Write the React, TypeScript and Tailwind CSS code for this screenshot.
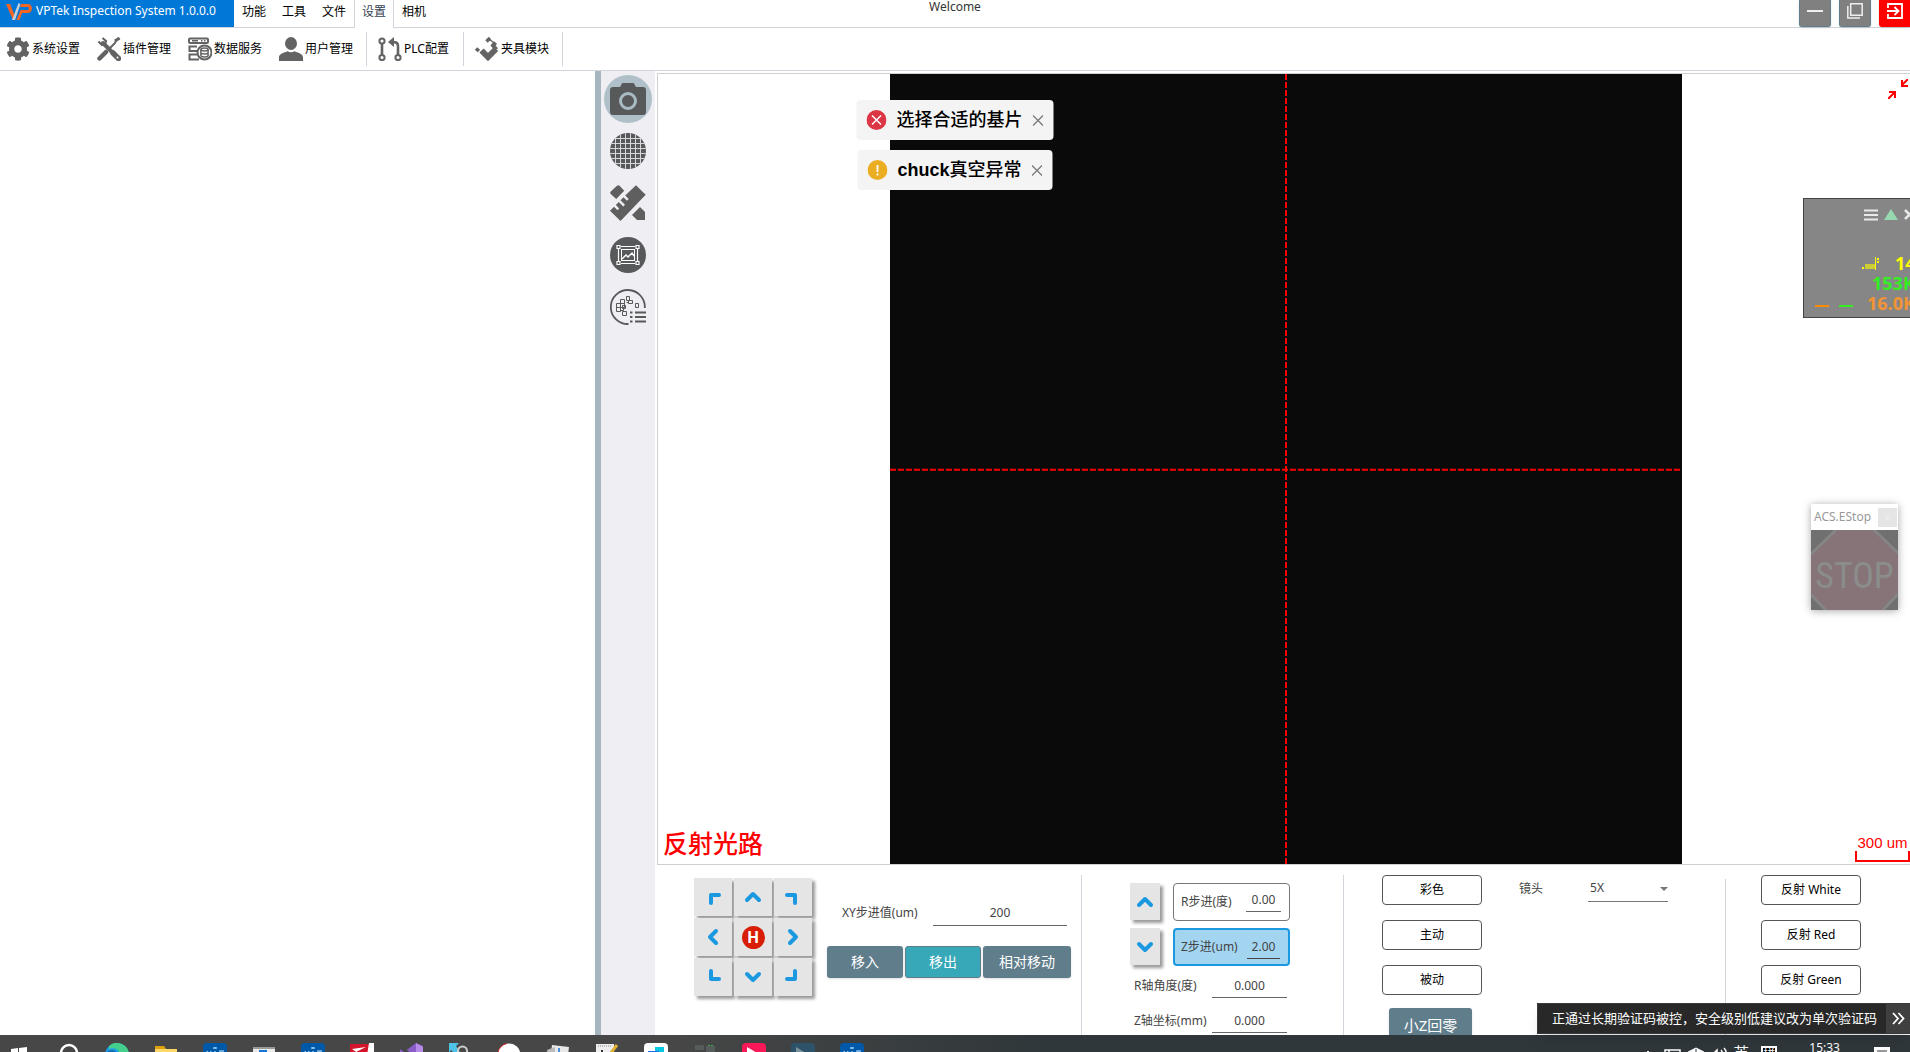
import type { ReactNode } from "react";
import { FaCog } from "react-icons/fa";

const BLUE = "#1a98e0";

/* ---------- drawings ---------- */

function Logo() {
  return (
    <svg width="26" height="18" viewBox="0 0 26 18" className="shrink-0">
      <path d="M0 1h4l4.500 11-1.500 5z" fill="#f26522" />
      <path d="M12.500 0l2 1-5.500 16H6z" fill="#c9ced6" />
      <path d="M15 1h7.500c4.500 0 4.500 9 0 9h-6.500l-2.500 7h-3l4-10h7.500c1 0 1-3 0-3h-8z" fill="#f26522" />
    </svg>
  );
}

function ToolsIcon() {
  return (
    <svg width="24" height="24" viewBox="0 0 24 24" fill="none" stroke="#636363">
      <path d="M6 6l14 14" strokeWidth="4" strokeLinecap="round" />
      <path d="M1.500 4.500L5 8l3-1 1-3-3.500-3" strokeWidth="2.200" />
      <path d="M22.500 1.500L19 3.500l-1 2.500-5 5" strokeWidth="2" />
      <path d="M22.500 1l-4.500 3" strokeWidth="3" />
      <path d="M9 15l-6.500 6.500" strokeWidth="4.500" strokeLinecap="round" />
      <path d="M16 16l5.500 5.500" strokeWidth="5.500" strokeLinecap="round" />
      <circle cx="20.500" cy="20.500" r="1" fill="#fff" stroke="none" />
    </svg>
  );
}

function DataIcon() {
  return (
    <svg width="24" height="24" viewBox="0 0 24 24" fill="none" stroke="#636363" strokeWidth="2">
      <rect x="1" y="1.500" width="19" height="4.500" rx="1" />
      <path d="M4 3.700h6M13 3.700h1.500M16 3.700h1.500" strokeWidth="1.500" />
      <path d="M9 9.500H1.500v4.500H9M9 17.500H1.500v5H11" strokeWidth="2" />
      <circle cx="16.500" cy="15.500" r="7" fill="#fff" />
      <ellipse cx="16.500" cy="12.500" rx="3.600" ry="1.500" strokeWidth="1.500" />
      <path d="M12.900 12.500v6c0 2 7.200 2 7.200 0v-6M12.900 15.500c0 2 7.200 2 7.200 0" strokeWidth="1.500" />
    </svg>
  );
}

function UserIcon() {
  return (
    <svg width="24" height="24" viewBox="0 0 24 24" fill="#636363">
      <ellipse cx="12" cy="6.500" rx="6" ry="6.500" />
      <path d="M0 24v-3.500C0 17 4 16 8.500 14.200c2 1.500 5 1.500 7 0C20 16 24 17 24 20.500V24z" />
    </svg>
  );
}

function PlcIcon() {
  return (
    <svg width="24" height="24" viewBox="0 0 24 24" fill="none" stroke="#636363" strokeWidth="2">
      <circle cx="4" cy="4" r="2.600" />
      <circle cx="4" cy="20.500" r="2.600" />
      <circle cx="20" cy="20.500" r="2.600" />
      <path d="M4 7v11" strokeWidth="2.600" />
      <path d="M20 18V9c0-3-1.500-4-5-4" strokeWidth="2.600" />
      <path d="M16 0v10l-6-5z" fill="#636363" stroke="none" />
    </svg>
  );
}

function ClampIcon() {
  return (
    <svg width="24" height="24" viewBox="0 0 24 24" fill="none" stroke="#636363">
      <path d="M6.500 13.500l6.500 6.500 8-8" strokeWidth="6" />
      <path d="M21.500 12.500l-3.500-4 2.500-3" strokeWidth="4" />
      <path d="M11.500 4.500L15 1M1 11.500l3 2.500" strokeWidth="3.500" />
      <path d="M14.500 2.500l4 3" strokeWidth="1.500" />
    </svg>
  );
}

function CameraIcon() {
  return (
    <svg width="48" height="48" viewBox="0 0 48 48">
      <circle cx="24" cy="24" r="24" fill="#b0c0c8" />
      <path d="M9 12h7l2-3.500c.3-.4.600-.5 1-.5h10c.400 0 .700.100 1 .5l2 3.500h7c2 0 3 1 3 3v22c0 2-1 3-3 3H9c-2 0-3-1-3-3V15c0-2 1-3 3-3z" fill="#58595b" />
      <circle cx="24" cy="26" r="7.500" fill="none" stroke="#a9bbc4" strokeWidth="3" />
    </svg>
  );
}

function WaferGridIcon() {
  const lines = [5.5, 10.5, 15.5, 20.5, 25.5, 30.5];
  return (
    <svg width="36" height="36" viewBox="0 0 36 36">
      <defs>
        <clipPath id="wafer">
          <circle cx="18" cy="18" r="18" />
        </clipPath>
      </defs>
      <g clipPath="url(#wafer)">
        <rect width="36" height="36" fill="#58595b" />
        {lines.map((p) => (
          <path key={p} d={`M0 ${p}h36M${p} 0v36`} stroke="#d8d8dc" />
        ))}
      </g>
    </svg>
  );
}

function RulerIcon() {
  return (
    <svg width="36" height="36" viewBox="0 0 36 36" fill="#5f5f5f">
      <path d="M7 .8c.8-.8 1.800-.8 2.600 0l4.600 5-8 8.200-5.400-5c-.8-.8-.8-1.800 0-2.600z" />
      <path d="M26 .3l9.700 9.500L10.500 36 0 25.800l4-4 3.500 3.400 1.700-1.700-3.400-3.500 3-3 4.500 4.500 1.700-1.700-4.500-4.500 3-3 3.500 3.500 1.700-1.700-3.500-3.500z" />
      <path d="M30 22l5 5v8h-8l-5-5z" />
    </svg>
  );
}

function ImageFrameIcon() {
  return (
    <svg width="36" height="36" viewBox="0 0 36 36" fill="none" stroke="#fff">
      <circle cx="18" cy="18" r="18" fill="#58595b" stroke="none" />
      <path d="M11 9.500h14M11 26.500h14M8.500 12v12M27.500 12v12" strokeWidth="1.200" />
      <rect x="11.500" y="12.500" width="13" height="11" />
      <path d="M7 8.500h3v3H7zM26 8.500h3v3h-3zM7 24.500h3v3H7zM26 24.500h3v3h-3z" strokeWidth="1.200" />
      <path d="M12 22l4-4 2 2 4-4 2 3" strokeWidth="1.400" />
    </svg>
  );
}

function WaferListIcon() {
  return (
    <svg width="36" height="36" viewBox="0 0 36 36" fill="none" stroke="#58595b">
      <path d="M18.500 35A17 17 0 1 1 34.800 19" strokeWidth="1.800" />
      <path d="M10.500 10.500h4v4h-4zM6.500 14.500h4v4h-4zM10.500 14.500h4v4h-4zM6.500 18.500h4v4h-4zM10.500 18.500h3v3h-3zM16.500 7.500h3v4h-3zM18.500 11.500h4v3h-4zM16.500 13.500h2M12.500 22.500h4v4h-4zM12.500 16.500h3v3h-3zM25.500 14.500h3v4h-3z" />
      <path d="M20 23.500h2.500M20 28h2.500M20 32.500h2.500M25 23.500h11M25 28h11M25 32.500h11" strokeWidth="2" />
    </svg>
  );
}

function Stroke({ d }: { d: string }) {
  return (
    <svg width="38" height="38" viewBox="0 0 38 38" fill="none" stroke={BLUE} strokeWidth="4" strokeLinecap="round" strokeLinejoin="round" className="shrink-0">
      <path d={d} />
    </svg>
  );
}

const UP = "M13 22l6-6 6 6";
const DOWN = "M13 16l6 6 6-6";
const pad: { label: string; d: string }[] = [
  { label: "左上", d: "M17 25v-8h8" },
  { label: "上", d: UP },
  { label: "右上", d: "M13 17h8v8" },
  { label: "左", d: "M22 13l-6 6 6 6" },
  { label: "H", d: "" },
  { label: "右", d: "M16 13l6 6-6 6" },
  { label: "左下", d: "M17 13v8h8" },
  { label: "下", d: DOWN },
  { label: "右下", d: "M21 13v8h-8" },
];

/* ---------- building blocks ---------- */

function MenuTab({ children, active = false }: { children: ReactNode; active?: boolean }) {
  return (
    <button
      className={
        active
          ? "-mb-px h-7 border-x border-gray-300 bg-white px-[7px] pb-1 text-gray-700"
          : "h-full px-2 pb-[3px]"
      }
    >
      {children}
    </button>
  );
}

function Tool({ icon, children }: { icon: ReactNode; children: ReactNode }) {
  return (
    <button className="flex items-center gap-0.5 whitespace-nowrap">
      {icon}
      <span>{children}</span>
    </button>
  );
}

function RailButton({ label, children }: { label: string; children: ReactNode }) {
  return (
    <button aria-label={label} className="flex h-[52px] w-full items-center justify-center">
      {children}
    </button>
  );
}

function OutlineButton({ children }: { children: ReactNode }) {
  return (
    <button className="h-[30px] w-[100px] rounded-[4px] border border-[#555] bg-white text-black">{children}</button>
  );
}

function Toast({ kind, children }: { kind: "error" | "warning"; children: ReactNode }) {
  return (
    <div role="alert" className="flex h-10 items-center gap-2.5 rounded-sm bg-[#f4f4f4] pl-2.5 text-lg font-medium whitespace-nowrap text-black">
      <svg width="20" height="20" viewBox="0 0 20 20">
        <circle cx="10" cy="10" r="10" fill={kind === "error" ? "#dc3545" : "#ebae23"} />
        {kind === "error" ? (
          <path d="M5.500 5.500l9 9M14.500 5.500l-9 9" stroke="#fff" strokeWidth="1.500" />
        ) : (
          <path d="M10 5v7M10 13.500v2" stroke="#fff" strokeWidth="1.800" />
        )}
      </svg>
      <span>{children}</span>
      <button aria-label="关闭" className="pr-2.5">
        <svg width="11" height="11" viewBox="0 0 11 11" stroke="#777" strokeWidth="1.200">
          <path d="M.5.5l10 10M10.500.5l-10 10" />
        </svg>
      </button>
    </div>
  );
}

function AxisValue({ id, label, value }: { id: string; label: string; value: string }) {
  return (
    <div className="flex h-[35px] items-center justify-between pl-1">
      <label htmlFor={id}>{label}</label>
      <input id={id} defaultValue={value} className="mr-[3px] h-6 w-[75px] border-b border-[#666] text-center outline-none" />
    </div>
  );
}

const shadow = "bg-[#e5e5e5] shadow-[3px_3px_3px_rgba(0,0,0,0.4)]";

function ControlPanel() {
  return (
    <section className="grid h-[170px] shrink-0 grid-cols-[427fr_262fr_382fr_184fr] overflow-hidden text-xs text-[#444]">
      <div className="flex pt-[13px]">
        <div className="ml-[39px] grid h-[118px] grid-cols-3 gap-0.5">
          {pad.map((p) => (
            <button key={p.label} aria-label={p.label} className={`flex size-[38px] items-center justify-center ${shadow}`}>
              {p.d ? (
                <Stroke d={p.d} />
              ) : (
                <span className="flex size-[23px] items-center justify-center rounded-full bg-[#d81e06] text-base font-bold text-white">H</span>
              )}
            </button>
          ))}
        </div>
        <div className="ml-[15px] flex flex-col pt-[22px]">
          <div className="flex items-center justify-between pr-1 pl-[15px]">
            <label htmlFor="xy">XY步进值(um)</label>
            <input id="xy" defaultValue="200" className="h-[26px] w-[134px] border-b border-[#666] text-center outline-none" />
          </div>
          <div className="mt-5 flex gap-0.5 text-sm text-white">
            <button className="h-8 w-[76px] rounded-[3px] bg-[#607d8b] shadow">移入</button>
            <button className="h-8 w-[76px] rounded-[3px] border border-[#607d8b] bg-[#36a8b8] shadow">移出</button>
            <button className="h-8 w-[88px] rounded-[3px] bg-[#607d8b] shadow">相对移动</button>
          </div>
        </div>
        <div className="mt-[-3px] ml-auto w-px bg-gray-300" />
      </div>

      <div className="flex justify-between pt-2.5">
        <div className="ml-12 flex w-[160px] flex-col pt-2">
          <div className="flex gap-[13px]">
            <button aria-label="增加" className={`flex h-[37px] w-[30px] items-center justify-center ${shadow}`}>
              <Stroke d={UP} />
            </button>
            <div className="flex h-[38px] w-[117px] items-center justify-between rounded-[4px] border border-[#777] pr-2 pl-[7px]">
              <label htmlFor="r-step">R步进(度)</label>
              <input id="r-step" defaultValue="0.00" className="mb-1 h-6 w-[35px] border-b border-[#666] text-center outline-none" />
            </div>
          </div>
          <div className="mt-[7px] flex gap-[13px]">
            <button aria-label="减少" className={`flex h-[37px] w-[30px] items-center justify-center ${shadow}`}>
              <Stroke d={DOWN} />
            </button>
            <div className="flex h-[38px] w-[117px] items-center justify-between rounded-[4px] border-2 border-[#1a98e0] bg-[#a3d5f1] pr-2 pl-1.5">
              <label htmlFor="z-step">Z步进(um)</label>
              <input id="z-step" defaultValue="2.00" className="h-6 w-[33px] border-b border-[#444] bg-transparent text-center outline-none" />
            </div>
          </div>
          <div className="pt-0.5">
            <AxisValue id="r-axis" label="R轴角度(度)" value="0.000" />
            <AxisValue id="z-axis" label="Z轴坐标(mm)" value="0.000" />
          </div>
        </div>
        <div className="w-px bg-gray-300" />
      </div>

      <div className="flex pt-2.5">
        <div className="ml-[38px] flex w-[100px] flex-col gap-[15px]">
          <OutlineButton>彩色</OutlineButton>
          <OutlineButton>主动</OutlineButton>
          <OutlineButton>被动</OutlineButton>
          <button className="-mt-0.5 ml-[7px] h-[34px] w-[83px] shrink-0 rounded-[3px] bg-[#607d8b] text-[15px] text-white shadow">小Z回零</button>
        </div>
        <div className="ml-[37px] flex h-[27px] items-center gap-[45px]">
          <label htmlFor="lens">镜头</label>
          <div className="relative h-full w-20 border-b border-[#777]">
            <select id="lens" defaultValue="5X" className="h-full w-full appearance-none bg-transparent pl-0.5 outline-none">
              <option>5X</option>
            </select>
            <span className="pointer-events-none absolute top-3 right-0 border-x-4 border-t-4 border-x-transparent border-t-[#777]" />
          </div>
        </div>
        <div className="mt-1 ml-auto w-px bg-gray-300" />
      </div>

      <div className="flex flex-col gap-[15px] pt-2.5 pl-[35px]">
        <OutlineButton>反射 White</OutlineButton>
        <OutlineButton>反射 Red</OutlineButton>
        <OutlineButton>反射 Green</OutlineButton>
      </div>
    </section>
  );
}

function Viewport() {
  return (
    <section className="relative mt-0.5 ml-0.5 flex min-h-0 flex-1 justify-center border border-r-0 border-[#d0d0d0] pl-1">
      <div className="flex aspect-[792/790] h-full bg-[#0a0a0a]">
        <svg width="100%" height="100%" className="text-[#ff0000]" stroke="currentColor" strokeWidth="2" strokeDasharray="6 2">
          <line x1="0" y1="50.1%" x2="100%" y2="50.1%" />
          <line x1="50%" y1="0" x2="50%" y2="100%" />
        </svg>
      </div>
      <span className="absolute bottom-[3px] left-[5px] text-[25px] leading-9 font-medium text-[#ff0000]">反射光路</span>
      <svg width="20" height="20" viewBox="0 0 20 20" fill="none" stroke="#ff0000" strokeWidth="2" className="absolute top-[5px] right-0.5">
        <path d="M20 0l-6 6M14 1v6h6" />
        <path d="M0 20l6-6M1 13h6v6" />
      </svg>
      <div className="absolute right-0 bottom-0.5 flex flex-col items-center">
        <span className="font-['Liberation_Sans'] text-[15px] leading-4 text-[#ff0000]">300 um</span>
        <span className="h-[11px] w-[55px] border-2 border-t-0 border-[#ff0000]" />
      </div>
    </section>
  );
}

function NetMonitor() {
  return (
    <aside className="absolute top-[198px] right-0 h-[120px] w-[107px] overflow-hidden border border-r-0 border-[#444] bg-[#868686] font-['Open_Sans'] text-lg leading-5 font-bold">
      <div className="mt-2.5 flex pl-[60px]">
        <svg width="56" height="12" viewBox="0 0 56 12" className="shrink-0" fill="none">
          <path d="M0 1.500h14M0 6h14M0 10.500h14" stroke="#e8e8e8" strokeWidth="2" />
          <path d="M27 0l7 11H20z" fill="#98d8b0" />
          <path d="M41 1l9 9M50 1l-9 9" stroke="#e8e8e8" strokeWidth="2.500" />
        </svg>
      </div>
      <div className="mt-8 flex pl-[58px] text-[#ffff00]">
        <svg width="18" height="13" viewBox="0 0 18 13" className="mt-1 mr-[15px] shrink-0">
          <path d="M0 10h2v2H0z M13 0h1v13h-1z M15 1h2v2h-2z M15 4h2v2h-2z" fill="#ffff00" />
          <path d="M3 7h10v5H3z" fill="#cccc33" />
        </svg>
        14
      </div>
      <div className="pl-[68px] text-[#33ee22]">153K</div>
      <div className="flex pl-[11px] text-[#f29434]">
        <span className="mt-3 h-0.5 w-3.5 shrink-0 bg-[#ff8c00]" />
        <span className="mt-3 mr-3.5 ml-2.5 h-0.5 w-3.5 shrink-0 bg-[#33ee22]" />
        16.0K
      </div>
    </aside>
  );
}

function EStop() {
  return (
    <aside className="absolute top-[504px] right-3 w-[87px] bg-white shadow-[0_1px_8px_rgba(0,0,0,0.35)]">
      <div className="flex h-[26px] items-center justify-between pr-px pl-[3px] text-xs text-[#999]">
        ACS.EStop
        <button aria-label="关闭" className="size-[19px] bg-[#e5e5e5] text-[10px] leading-4 text-[#f0f0f0]">x</button>
      </div>
      <svg width="87" height="80" viewBox="0 0 87 80" className="block">
        <rect width="87" height="80" fill="#707070" />
        <path d="M25 0h38l24 23v41L72 80H15L0 65V24z" fill="#867478" />
        <path d="M25 0L0 24M63 0l24 23M0 65l15 15M87 64L72 80" stroke="#858585" strokeWidth="3" />
        <text x="43.500" y="58" textAnchor="middle" fontFamily="Liberation Sans Narrow, Roboto Condensed, Liberation Sans" fontSize="36" fill="#8b8d8b">
          STOP
        </text>
      </svg>
    </aside>
  );
}

const VieIcon = ({ faded = false }: { faded?: boolean }) => (
  <>
    <rect width="24" height="24" rx="4" fill={faded ? "#2c5369" : "#0058a8"} />
    {faded ? (
      <path d="M5 4l10 6-10 8z" fill="#7a929c" />
    ) : (
      <path d="M4 8l2 5 2-5M12 8v6M21 8h-4v6M12 4v2M10 5h4" stroke="#8fc1ea" strokeWidth="1.500" fill="none" />
    )}
  </>
);

const apps: { name: string; art: ReactNode }[] = [
  { name: "开始", art: <path d="M4 6l7-1v9H4zM12 5l8-1v10h-8z" fill="#fff" /> },
  { name: "搜索", art: <circle cx="13" cy="10" r="8" fill="none" stroke="#fff" strokeWidth="2.500" /> },
  {
    name: "Edge",
    art: (
      <>
        <circle cx="12" cy="12" r="12" fill="#1b9de2" />
        <path d="M4 3a12 12 0 0 1 20 9h-9C14 6 9 4 4 6z" fill="#45cf8c" />
        <path d="M0 11c4-6 12-4 13 1H5z" fill="#1464ad" />
      </>
    ),
  },
  {
    name: "文件资源管理器",
    art: (
      <>
        <path d="M1 3h9l2 3h10v12H1z" fill="#e0a010" />
        <path d="M1 6h22v14H1z" fill="#ffd968" />
      </>
    ),
  },
  { name: "VIE", art: <VieIcon /> },
  {
    name: "窗口",
    art: (
      <>
        <rect x="1" y="4" width="22" height="18" fill="#ececec" />
        <path d="M1 4h22v2H1z" fill="#9a9a9a" />
        <path d="M7 7h8v8H7z" fill="#1374d6" />
      </>
    ),
  },
  { name: "VIE 2", art: <VieIcon /> },
  {
    name: "红色工具",
    art: (
      <>
        <path d="M0 1h24v23H0z" fill="#d4142a" />
        <path d="M19 0h5v24h-9z M2 6l14-2-10 5z" fill="#fff" />
      </>
    ),
  },
  {
    name: "Visual Studio",
    art: (
      <>
        <path d="M1 6l4 3 12-9 7 3v21H1z" fill="#8c5cc8" />
        <path d="M5 5l7 5-7 6z" fill="#484848" />
        <path d="M17 0l7 4v20h-7z" fill="#b78ce8" />
      </>
    ),
  },
  {
    name: "锁定",
    art: (
      <>
        <path d="M1 0h10L8 3l4 6-4 3-5-5-2 3z" fill="#4fc4e8" />
        <path d="M10 14V8a4 4 0 0 1 9 0v6" fill="none" stroke="#ccc" strokeWidth="2" />
      </>
    ),
  },
  {
    name: "圆形应用",
    art: (
      <>
        <circle cx="12" cy="12" r="11.500" fill="#fff" />
        <path d="M1 10a11 11 0 0 1 9-9.500" stroke="#d42a2a" fill="none" />
        <path d="M5 9.500h14" stroke="#bbb" strokeDasharray="3 2" />
      </>
    ),
  },
  {
    name: "文档",
    art: (
      <>
        <path d="M6 2l17 2-2 16H4z" fill="#e8e8e8" />
        <path d="M1 7l8-3v12H2z" fill="#bbb" />
        <path d="M13 5v5" stroke="#4a90d9" strokeWidth="2" />
      </>
    ),
  },
  {
    name: "记事",
    art: (
      <>
        <path d="M1 1h18v20H1z" fill="#eee" />
        <path d="M3 3h14" stroke="#888" strokeDasharray="1 1" />
        <path d="M22 2l-7 9" stroke="#e0b030" strokeWidth="3" />
        <path d="M7 7v5" stroke="#333" strokeWidth="2" />
      </>
    ),
  },
  {
    name: "远程",
    art: (
      <>
        <rect width="24" height="24" rx="4" fill="#fff" />
        <path d="M11 4h9v6h-9z" fill="#08c8e0" />
        <path d="M4 8h11v6H4z" fill="#1c6ce8" />
      </>
    ),
  },
  {
    name: "设备",
    art: (
      <>
        <path d="M2 2h9v5H2zM13 3h9v7h-9z" fill="#565b5c" />
        <path d="M15 2.500h6" stroke="#38b048" strokeDasharray="2 1" />
      </>
    ),
  },
  {
    name: "播放",
    art: (
      <>
        <rect width="24" height="24" rx="4" fill="#fb1858" />
        <path d="M5 4l12 7-12 8z" fill="#fff" />
      </>
    ),
  },
  { name: "终端", art: <VieIcon faded /> },
  { name: "VIE 3", art: <VieIcon /> },
];

function Taskbar() {
  return (
    <footer className="flex h-[17px] shrink-0 items-start overflow-hidden bg-linear-to-r from-[#474747] from-35% to-[#2f373a] to-55%">
      <div className="-ml-1.5 flex">
        {apps.map((a) => (
          <button key={a.name} aria-label={a.name} className="flex w-[49px] justify-center pt-2">
            <svg width="24" height="24" viewBox="0 0 24 24">
              {a.art}
            </svg>
          </button>
        ))}
      </div>
      <div className="ml-auto flex items-start pr-5 text-white">
        <svg width="88" height="24" viewBox="0 0 88 24" fill="none" stroke="#fff" className="mt-2 mr-0.5">
          <path d="M0 13l5-5 5 5" />
          <path d="M22 7h15v12H22zM26 7v3" strokeWidth="1.500" />
          <path d="M45 9l8-4 8 4v9H45z" fill="#fff" />
          <path d="M53 6v12M45 10h16" stroke="#30373a" />
          <path d="M70 11l4-4v12M78 7c2 2 2 6 0 8M81 5c3 3 3 9 0 12" strokeWidth="1.500" />
        </svg>
        <span className="mt-2 text-base leading-5">英</span>
        <span className="mt-[11px] ml-3 border-2 border-white bg-black text-xs leading-3">拼</span>
        <time className="mt-[5px] ml-8 text-xs leading-4">15:33</time>
        <svg width="16" height="16" viewBox="0 0 16 16" className="mt-3 ml-[34px]">
          <path d="M0 0h16v13H0z" fill="#fff" />
          <path d="M3 4h10" stroke="#30373a" />
        </svg>
      </div>
    </footer>
  );
}

/* ---------- page ---------- */

export default function App() {
  return (
    <div className="relative flex h-screen flex-col overflow-hidden bg-white font-['Noto_Sans','Noto_Sans_CJK_SC',sans-serif] text-xs text-black">
      <header className="relative flex h-7 shrink-0 border-b border-gray-300">
        <div className="flex w-[234px] items-start gap-1 bg-[#0078d7] pt-[3px] pl-1.5 whitespace-nowrap text-white">
          <Logo />
          <h1>VPTek Inspection System 1.0.0.0</h1>
        </div>
        <nav className="flex">
          <MenuTab>功能</MenuTab>
          <MenuTab>工具</MenuTab>
          <MenuTab>文件</MenuTab>
          <MenuTab active>设置</MenuTab>
          <MenuTab>相机</MenuTab>
        </nav>
        <span className="pointer-events-none absolute inset-x-0 top-0 text-center leading-[14px] text-[#333]">Welcome</span>
        <div className="ml-auto flex gap-2">
          <button aria-label="最小化" className="flex h-[27px] w-8 justify-center rounded-b-[3px] border border-t-0 border-[#607d8b] bg-[#808080] shadow">
            <svg width="16" height="24" viewBox="0 0 16 24" stroke="#eee" strokeWidth="2">
              <path d="M0 11h16" />
            </svg>
          </button>
          <button aria-label="还原" className="flex h-[27px] w-8 justify-center rounded-b-[3px] border border-t-0 border-[#607d8b] bg-[#808080] shadow">
            <svg width="16" height="24" viewBox="0 0 16 24" fill="none" stroke="#eee" strokeWidth="1.500">
              <path d="M3.700 3.700h11.500v11.500H3.700zM.8 6v12H13" />
            </svg>
          </button>
          <button aria-label="退出" className="flex h-[27px] w-[31px] justify-center rounded-bl-[3px] bg-[#ff0000] shadow">
            <svg width="16" height="24" viewBox="0 0 16 24" fill="none" stroke="#fff" strokeWidth="1.800">
              <path d="M1 8V4h14v14H1v-4M0 11h11M7.500 7l4 4-4 4" />
            </svg>
          </button>
        </div>
      </header>

      <div className="flex h-[43px] shrink-0 border-b border-gray-300 pt-1 pb-1">
        <div className="flex gap-[17px] border-r border-gray-300 pr-[13px] pl-1.5">
          <Tool icon={<FaCog size={24} color="#636363" />}>系统设置</Tool>
          <Tool icon={<ToolsIcon />}>插件管理</Tool>
          <Tool icon={<DataIcon />}>数据服务</Tool>
          <Tool icon={<UserIcon />}>用户管理</Tool>
        </div>
        <div className="flex border-r border-gray-300 pr-3.5 pl-[11px]">
          <Tool icon={<PlcIcon />}>PLC配置</Tool>
        </div>
        <div className="flex border-r border-gray-300 pr-[13px] pl-[11px]">
          <Tool icon={<ClampIcon />}>夹具模块</Tool>
        </div>
      </div>

      <main className="flex min-h-0 flex-1">
        <div className="w-[595px] shrink-0" />
        <div className="w-1.5 shrink-0 bg-[#a5b6bf]" />
        <nav className="flex w-[54px] shrink-0 flex-col bg-[#eeeef3] pt-0.5">
          <RailButton label="相机"><CameraIcon /></RailButton>
          <RailButton label="晶圆"><WaferGridIcon /></RailButton>
          <RailButton label="测量"><RulerIcon /></RailButton>
          <RailButton label="图像"><ImageFrameIcon /></RailButton>
          <RailButton label="列表"><WaferListIcon /></RailButton>
        </nav>
        <div className="flex min-w-0 flex-1 flex-col">
          <Viewport />
          <ControlPanel />
        </div>
      </main>

      <Taskbar />

      <div className="absolute top-[100px] left-1/2 flex -translate-x-1/2 flex-col items-center gap-2.5 font-['Liberation_Sans','Noto_Sans_CJK_SC',sans-serif]">
        <Toast kind="error">选择合适的基片</Toast>
        <Toast kind="warning"><b className="font-bold">chuck</b>真空异常</Toast>
      </div>
      <NetMonitor />
      <EStop />
      <div className="absolute right-0 bottom-[18px] flex h-[31px] items-center border border-r-0 border-[#3a3a3a] bg-[#282828] text-[13px] whitespace-nowrap text-white shadow-lg">
        <span className="pr-[9px] pl-3.5">正通过长期验证码被控，安全级别低建议改为单次验证码</span>
        <button aria-label="展开" className="flex h-full w-6 items-center justify-center bg-[#3f3f3f]">
          <svg width="13" height="13" viewBox="0 0 13 13" fill="none" stroke="#fff" strokeWidth="1.800">
            <path d="M1 1l5 5.500L1 12M6.500 1l5 5.500-5 5.500" />
          </svg>
        </button>
      </div>
    </div>
  );
}
